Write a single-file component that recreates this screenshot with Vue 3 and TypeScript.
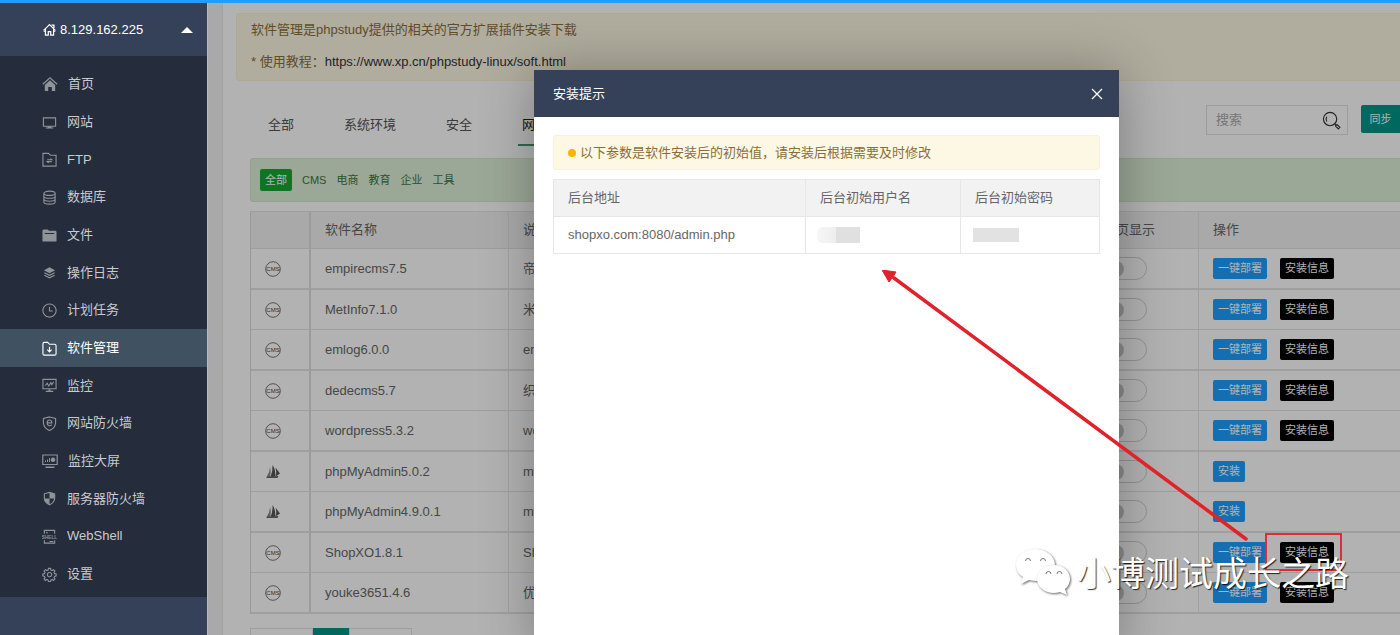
<script setup lang="ts">
import { ref } from 'vue'

interface MenuItem {
  label: string
  stroke?: string
  fill?: string
  wide?: boolean
  tag?: string
}

interface Software {
  name: string
  note: string
  kind: 'cms' | 'sail'
}

const menu: MenuItem[] = [
  { label: '首页', wide: true, stroke: 'M.8 8.3 8 1.8l7.2 6.5', fill: 'M8 4.2 13.2 9v6H9.8v-4H6.2v4H2.8V9z' },
  { label: '网站', stroke: 'M1.5 3h13v9h-13z', fill: 'M6 12h4v1.3h2v1.2H4v-1.2h2z' },
  { label: 'FTP', stroke: 'M1 1.5h6l2 2h6V15H1z M5.500 8.300h5L9 7 M10.500 10.300h-5L7 11.600' },
  {
    label: '数据库',
    stroke:
      'M2 3.500c0-3 12-3 12 0s-12 3-12 0z M2 3.500v9.300c0 3 12 3 12 0V3.500 M2 6.600c0 3 12 3 12 0 M2 9.700c0 3 12 3 12 0'
  },
  { label: '文件', fill: 'M.5 3q0-1.500 1.500-1.500h4l1.500 1.500H14q1.500 0 1.500 1.500v9q0 1-1 1h-13q-1 0-1-1z M3 5.400v1h10v-1z' },
  { label: '操作日志', stroke: 'M2.500 8.300 8 11l5.500-2.700 M2.500 11 8 13.700 13.500 11', fill: 'M8 2.500 14 5.600 8 8.700 2 5.600z' },
  { label: '计划任务', stroke: 'M8 1a7 7 0 1 0 .01 0z M8 4v4.500h3.500' },
  { label: '软件管理', stroke: 'M1 3q0-1.500 1.500-1.500H6l2 2h5.500q1.500 0 1.500 1.500v8.500q0 1.500-1.500 1.500h-11Q1 15 1 13.500z M8 6v5.500 M5.700 9.300 8 11.600l2.300-2.300' },
  { label: '监控', stroke: 'M1 1.500h14v10H1z M3.500 8l2-2.500 1.700 3L9.500 5l1 2 2-3', fill: 'M7 12h2v1.500h3v1.300H4v-1.300h3z' },
  { label: '网站防火墙', stroke: 'M8 1 14.500 2.500v5Q14 13 8 15.500 2 13 1.500 7.500v-5z M5.500 7.300h5c0-4-5-4-5 0s3.500 3.500 5 2' },
  { label: '监控大屏', wide: true, stroke: 'M.8 2h14.400v9.500H.8z', fill: 'M3 9V7.500h1V9z M5 9V6.500h1V9z M7 9V5h1v4z M11 4.500a2.300 2.300 0 1 0 .01 0z M3.500 13.500h9v1.500h-9z' },
  { label: '服务器防火墙', stroke: 'M8 1.500 13.500 3v5Q13 12.500 8 14.700 3 12.500 2.500 8V3z', fill: 'M8 1.500 13.500 3v5H8z M8 8v6.700Q3 12.500 2.500 8z' },
  { label: 'WebShell', stroke: 'M2.500 5V1.500h11V5 M2.500 12v3h11v-3 M4.500 3.500l1.500 1 M8 13.300h4', tag: 'SHELL' },
  {
    label: '设置',
    stroke:
      'M6.900 1.500h2.200l.4 1.800 1.300.5 1.500-1 1.500 1.500-1 1.500.6 1.300 1.700.4v2l-1.700.5-.6 1.300 1 1.500-1.500 1.500-1.500-1-1.300.6-.4 1.600H6.900l-.4-1.600-1.300-.6-1.500 1-1.500-1.500 1-1.500-.6-1.300-1.700-.5v-2l1.700-.4.6-1.300-1-1.500 1.500-1.500 1.500 1 1.300-.5z M8 5.800a2.300 2.300 0 1 0 .01 0z'
  }
]

const tabs = ['全部', '系统环境', '安全', '网站程序']
const filters = ['全部', 'CMS', '电商', '教育', '企业', '工具']

const software: Software[] = [
  { name: 'empirecms7.5', note: '帝国CMS', kind: 'cms' },
  { name: 'MetInfo7.1.0', note: '米拓建站', kind: 'cms' },
  { name: 'emlog6.0.0', note: 'emlog', kind: 'cms' },
  { name: 'dedecms5.7', note: '织梦CMS', kind: 'cms' },
  { name: 'wordpress5.3.2', note: 'wordpress', kind: 'cms' },
  { name: 'phpMyAdmin5.0.2', note: 'mysql', kind: 'sail' },
  { name: 'phpMyAdmin4.9.0.1', note: 'mysql', kind: 'sail' },
  { name: 'ShopXO1.8.1', note: 'ShopXO', kind: 'cms' },
  { name: 'youke3651.4.6', note: '优客365', kind: 'cms' }
]

const activeMenu = ref('软件管理')
const activeTab = ref('网站程序')
const activeFilter = ref('全部')
const keyword = ref('')
</script>

<template>
  <div class="app">
    <div class="progress"></div>
    <div class="layout">
      <aside class="sidebar">
        <div class="host">
          <svg class="host-icon" viewBox="0 0 16 16" fill="none" stroke="currentColor" stroke-width="1.500">
            <path d="M.8 9 8 2l7.200 7 M3 7.500V15h3.500v-4.500h3V15H13V7.500 M10.500 2.500h3V6 M.8 9 2 10.500 M15.200 9 14 10.500" />
          </svg>
          <span>8.129.162.225</span>
          <i class="caret"></i>
        </div>
        <nav class="menu">
          <a
            v-for="item in menu"
            :key="item.label"
            href="#"
            class="menu-item"
            :class="{ active: item.label === activeMenu }"
            @click.prevent="activeMenu = item.label"
          >
            <svg class="menu-icon" :class="{ wide: item.wide }" viewBox="0 0 16 16">
              <path v-if="item.stroke" :d="item.stroke" fill="none" stroke="currentColor" stroke-width="1.200" />
              <path v-if="item.fill" :d="item.fill" fill="currentColor" fill-rule="evenodd" />
              <text v-if="item.tag" x="8" y="10.500" text-anchor="middle" class="tag">{{ item.tag }}</text>
            </svg>
            <span>{{ item.label }}</span>
          </a>
        </nav>
      </aside>

      <main class="frame">
        <div class="page">
          <div class="notice">
            <p>软件管理是phpstudy提供的相关的官方扩展插件安装下载</p>
            <p>* 使用教程：<a href="#">https://www.xp.cn/phpstudy-linux/soft.html</a></p>
          </div>

          <div class="toolbar">
            <div class="tabs">
              <button
                v-for="tab in tabs"
                :key="tab"
                type="button"
                class="tab"
                :class="{ active: tab === activeTab }"
                @click="activeTab = tab"
              >
                {{ tab }}
              </button>
            </div>
            <div class="search">
              <input v-model="keyword" type="text" placeholder="搜索" aria-label="搜索" />
              <svg viewBox="0 0 20 20" fill="none" stroke="#333" stroke-width="1.200">
                <circle cx="8.500" cy="8.500" r="7" />
                <path d="M5 6q-1.500 2.500 0 5 M13.500 13.500l1.300 1.300 M14.200 15.800l1.600-1.600 3 3-1.600 1.600z" />
              </svg>
            </div>
            <button type="button" class="sync">同步</button>
          </div>

          <div class="filters">
            <button
              v-for="item in filters"
              :key="item"
              type="button"
              class="chip"
              :class="{ active: item === activeFilter }"
              @click="activeFilter = item"
            >
              {{ item }}
            </button>
          </div>

          <table class="list">
            <colgroup>
              <col class="c-icon" />
              <col class="c-name" />
              <col />
              <col class="c-show" />
              <col class="c-action" />
            </colgroup>
            <thead>
              <tr>
                <th></th>
                <th>软件名称</th>
                <th>说明</th>
                <th>首页显示</th>
                <th>操作</th>
              </tr>
            </thead>
            <tbody>
              <tr v-for="row in software" :key="row.name">
                <td>
                  <svg v-if="row.kind === 'cms'" class="kind" viewBox="0 0 16 16">
                    <circle cx="8" cy="8" r="7.300" fill="none" stroke="#666" stroke-width=".9" />
                    <text x="8" y="10" text-anchor="middle" class="cms">CMS</text>
                  </svg>
                  <svg v-else class="kind" viewBox="0 0 16 16">
                    <path d="M5 3Q5 8 1.500 13H5Q6.500 8 5 3z" fill="#888" />
                    <path d="M7.500 1Q8 7 5.500 13H10Q11 6 7.500 1z M10.500 3.500Q12 8 10.500 12.500l4.500-3z" fill="#555" />
                    <path d="M1 13q6-1 12.500-1l-1 2H2z" fill="#666" />
                  </svg>
                </td>
                <td>{{ row.name }}</td>
                <td>{{ row.note }}</td>
                <td><input type="checkbox" class="switch" :aria-label="row.name + ' 首页显示'" /></td>
                <td>
                  <div class="actions">
                    <template v-if="row.kind === 'cms'">
                      <button type="button" class="btn blue">一键部署</button>
                      <button type="button" class="btn black">安装信息</button>
                    </template>
                    <button v-else type="button" class="btn blue">安装</button>
                  </div>
                </td>
              </tr>
            </tbody>
          </table>

          <div class="pager">
            <button type="button" aria-label="上一页"></button>
            <button type="button" class="current" aria-label="1"></button>
            <button type="button" aria-label="下一页"></button>
          </div>
        </div>

        <div class="shade"></div>

        <section class="dialog" role="dialog" aria-labelledby="dialog-title">
          <header class="dialog-head">
            <h2 id="dialog-title">安装提示</h2>
            <button type="button" aria-label="关闭">
              <svg viewBox="0 0 12 12" stroke="#fff" stroke-width="1.300"><path d="M1 1l10 10M11 1 1 11" /></svg>
            </button>
          </header>
          <div class="dialog-body">
            <p class="tip"><i class="dot"></i>以下参数是软件安装后的初始值，请安装后根据需要及时修改</p>
            <table class="info">
              <colgroup>
                <col />
                <col class="c-user" />
                <col class="c-pass" />
              </colgroup>
              <thead>
                <tr>
                  <th>后台地址</th>
                  <th>后台初始用户名</th>
                  <th>后台初始密码</th>
                </tr>
              </thead>
              <tbody>
                <tr>
                  <td>shopxo.com:8080/admin.php</td>
                  <td><span class="mask user"></span></td>
                  <td><span class="mask pass"></span></td>
                </tr>
              </tbody>
            </table>
          </div>
        </section>
      </main>
    </div>

    <svg class="arrow" viewBox="0 0 366 272">
      <path d="M364 269 12 8" stroke="#e0222a" stroke-width="3.500" stroke-linecap="round" />
      <path d="M0 0 14 2 11 7 7 12z" fill="#e0222a" stroke="#e0222a" />
    </svg>
    <div class="highlight"></div>
    <div class="watermark">
      <svg viewBox="0 0 56 48">
        <g class="bubble">
          <path d="M20 1C9 1 1 8 1 17c0 5 3 10 7 12l-2 7 8-4q4 1 8 1c10 0 18-7 18-16S31 1 20 1z" />
          <path d="M39 17c-9 0-17 6-17 14s8 14 17 14q3 0 6-1l7 3-2-6c3-2 5-6 5-10 0-8-7-14-16-14z" />
        </g>
        <path class="eyes" d="M10.500 13a2.500 2.500 0 0 1 5 0M25.500 13a2.500 2.500 0 0 1 5 0M31 26a2.500 2.500 0 0 1 5 0M42 26a2.500 2.500 0 0 1 5 0" />
      </svg>
      <span>小博测试成长之路</span>
    </div>
  </div>
</template>

<style>
body {
  margin: 0;
  overflow: hidden;
}
</style>

<style scoped>
* {
  box-sizing: border-box;
}
.app {
  position: relative;
  display: flex;
  flex-direction: column;
  height: 100vh;
  overflow: hidden;
  font: 13px/20px 'Liberation Sans', 'Noto Sans CJK SC', sans-serif;
  color: #666;
}
button,
input {
  font: inherit;
  border: 0;
  padding: 0;
  margin: 0;
}
button {
  cursor: pointer;
  white-space: nowrap;
}
a {
  color: inherit;
  text-decoration: none;
}
.progress {
  height: 3px;
  flex: none;
  background: #1e9fff;
}
.layout {
  flex: 1;
  display: flex;
  min-height: 0;
}
.sidebar {
  width: 207px;
  flex: none;
  background: #354059;
  color: #c8cbd0;
}
.host {
  display: flex;
  align-items: center;
  height: 53px;
  padding: 0 14px 0 43px;
  color: #fff;
}
.host-icon {
  width: 13px;
  height: 13px;
  margin-right: 4px;
}
.caret {
  margin-left: auto;
  border: 6px solid transparent;
  border-top: 0;
  border-bottom-color: #fff;
}
.menu {
  padding: 9px 0 4px;
  background: #252c3b;
}
.menu-item {
  display: flex;
  align-items: center;
  gap: 10px;
  height: 38px;
  padding-left: 42px;
}
.menu-item:nth-child(3n) {
  height: 37px;
}
.menu-item.active {
  background: #405262;
  color: #fff;
}
.menu-icon {
  width: 15px;
  height: 15px;
  color: #8f9498;
}
.menu-icon.wide {
  width: 16px;
  height: 16px;
}
.active .menu-icon {
  color: #fff;
}
.tag {
  font-size: 5px;
  font-weight: 700;
  fill: currentColor;
}
.frame {
  position: relative;
  flex: 1;
  min-width: 0;
  overflow: hidden;
  padding-left: 14px;
  background: #f2f2f2;
  border-left: 1px solid #b6bac2;
}
.page {
  min-height: 100%;
  padding: 10px 0 0 27px;
  background: #fff;
  border-left: 1px solid #e8e8e8;
}
.notice {
  margin-left: -14px;
  padding: 6px 14px 8px;
  background: #fcf8e3;
  border: 1px solid #faf2cc;
  border-right: 0;
  border-radius: 4px 0 0 4px;
  color: #8a6d3b;
}
.notice p {
  margin: 0;
  line-height: 20px;
}
.notice p + p {
  margin-top: 12px;
}
.notice a {
  color: #333;
}
.toolbar {
  display: flex;
  align-items: flex-start;
  padding: 24px 0 12px 14px;
}
.tabs {
  display: flex;
  gap: 42px;
  flex: 1;
}
.tab {
  height: 41px;
  padding: 0 4px;
  background: none;
  color: #555;
  border-bottom: 2px solid transparent;
}
.tab.active {
  color: #222;
  border-bottom-color: #3c9a70;
}
.search {
  display: flex;
  align-items: center;
  width: 142px;
  height: 30px;
  margin-right: 13px;
  padding: 0 6px 0 9px;
  border: 1px solid #e0e0e0;
}
.search input {
  flex: 1;
  min-width: 0;
  background: none;
  outline: 0;
}
.search input::placeholder {
  color: #aaa;
}
.search svg {
  width: 19px;
  height: 19px;
  flex: none;
}
.sync {
  width: 39px;
  height: 28px;
  background: #009688;
  color: #fff;
  font-size: 11px;
  border-radius: 2px 0 0 2px;
}
.filters {
  display: flex;
  align-items: center;
  gap: 10px;
  height: 44px;
  padding-left: 9px;
  background: #dff0d8;
  border: 1px solid #d6e9c6;
  border-right: 0;
  border-radius: 3px 0 0 3px;
}
.chip {
  height: 22px;
  font-size: 11px;
  color: #3c763d;
  background: none;
}
.chip.active {
  padding: 0 5px;
  background: #16a832;
  color: #fff;
  border-radius: 2px;
}
.list {
  width: 100%;
  margin-top: 9px;
  table-layout: fixed;
  border-collapse: separate;
  border-spacing: 0;
  border-top: 1px solid #e6e6e6;
  border-left: 1px solid #dcdcdc;
}
.c-icon {
  width: 60px;
}
.c-name {
  width: 198px;
}
.c-show {
  width: 110px;
}
.c-action {
  width: 201px;
}
.list th,
.list td {
  padding: 0 14px;
  text-align: left;
  font-weight: 400;
  border-bottom: 1px solid #e2e2e2;
  border-right: 1px solid #e6e6e6;
  white-space: nowrap;
  overflow: hidden;
}
.list th:first-child,
.list td:first-child {
  border-right: 2px solid #dedede;
}
.list th:last-child,
.list td:last-child {
  border-right: 0;
}
.list th {
  height: 37px;
  background: #f2f2f2;
}
.list td {
  height: 41px;
}
.list tr:nth-child(even) td {
  height: 40px;
}
.list tbody tr:nth-child(odd) td {
  border-bottom: 2px solid #e4e4e4;
}
.kind {
  display: block;
  width: 16px;
  height: 16px;
}
.cms {
  font-size: 6px;
  fill: #444;
}
.switch {
  appearance: none;
  display: flex;
  align-items: center;
  width: 44px;
  height: 23px;
  padding-left: 4px;
  border: 1px solid #d2d2d2;
  border-radius: 12px;
}
.switch::before {
  content: '';
  width: 16px;
  height: 16px;
  border-radius: 50%;
  background: #c8c8c8;
}
.actions {
  display: flex;
  gap: 13px;
}
.btn {
  height: 21px;
  padding: 0 5px;
  border-radius: 2px;
  font-size: 11px;
  line-height: 21px;
  color: #fff;
}
.blue {
  background: #1e9fff;
}
.black {
  background: #000;
}
.pager {
  display: flex;
  margin-top: 14px;
}
.pager button {
  width: 63px;
  height: 28px;
  background: #fff;
  border: 1px solid #e2e2e2;
}
.pager .current {
  width: 36px;
  background: #009688;
  border: 0;
}
.shade {
  position: absolute;
  inset: 0;
  background: rgba(0, 0, 0, 0.3);
}
.dialog {
  position: absolute;
  top: 67px;
  left: 326px;
  bottom: -20px;
  width: 585px;
  background: #fff;
  box-shadow: 1px 1px 50px rgba(0, 0, 0, 0.3);
}
.dialog-head {
  display: flex;
  align-items: center;
  justify-content: space-between;
  height: 47px;
  padding: 0 16px 0 19px;
  background: #354059;
  color: #fff;
}
.dialog-head h2 {
  margin: 0;
  font-size: 13px;
  font-weight: 400;
}
.dialog-head button {
  display: flex;
  background: none;
}
.dialog-head svg {
  width: 12px;
  height: 12px;
}
.dialog-body {
  padding: 18px 19px;
}
.tip {
  display: flex;
  align-items: center;
  height: 35px;
  margin: 0 0 9px;
  padding-left: 14px;
  background: #fcf8e3;
  border: 1px solid #faf2cc;
  border-radius: 3px;
  color: #8a6d3b;
}
.dot {
  width: 8px;
  height: 8px;
  margin-right: 4px;
  border-radius: 50%;
  background: #ffb300;
}
.info {
  width: 100%;
  table-layout: fixed;
  border-collapse: collapse;
}
.c-user {
  width: 155px;
}
.c-pass {
  width: 139px;
}
.info th,
.info td {
  height: 37px;
  padding: 0 14px;
  text-align: left;
  font-weight: 400;
  border: 1px solid #e6e6e6;
}
.info th {
  background: #f2f2f2;
}
.mask {
  display: block;
  height: 14px;
  background: #e2e2e2;
}
.mask.user {
  width: 43px;
  height: 16px;
  margin-left: -3px;
  border-radius: 6px 0 0 6px;
  background: linear-gradient(90deg, #f6f6f6, #eee 19px, #e0e0e0 19px);
}
.mask.pass {
  width: 46px;
  margin-left: -2px;
}
.arrow {
  position: absolute;
  left: 882px;
  top: 270px;
  width: 366px;
  height: 272px;
  pointer-events: none;
}
.highlight {
  position: absolute;
  left: 1265px;
  top: 533px;
  width: 77px;
  height: 38px;
  border: 2px solid #d8303a;
  pointer-events: none;
}
.watermark {
  position: absolute;
  left: 1015px;
  top: 548px;
  display: flex;
  align-items: center;
  gap: 6px;
  pointer-events: none;
}
.watermark svg {
  width: 56px;
  height: 48px;
  overflow: visible;
}
.bubble {
  fill: #fff;
}
.bubble path {
  filter: drop-shadow(1px 1px 1px rgba(0, 0, 0, 0.6));
}
.eyes {
  fill: none;
  stroke: #777;
}
.watermark span {
  font-family: 'Noto Sans CJK SC', sans-serif;
  font-size: 34px;
  font-weight: 400;
  line-height: 48px;
  color: #fff;
  white-space: nowrap;
  text-shadow: 1px 1px 1px rgba(0, 0, 0, 0.8);
}
</style>
